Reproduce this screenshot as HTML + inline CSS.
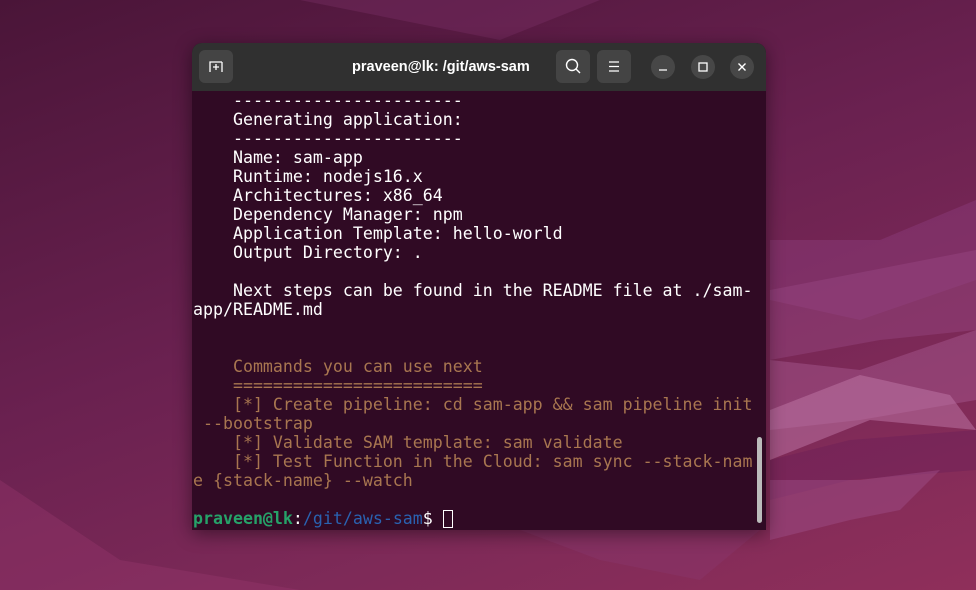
<!DOCTYPE html>
<html><head><meta charset="utf-8"><style>
html,body{margin:0;padding:0;width:976px;height:590px;overflow:hidden}
body{background:linear-gradient(160deg,#4a1538 0%,#6a2150 45%,#7e2a58 75%,#8f2f5a 100%);position:relative;font-family:"DejaVu Sans Mono","Liberation Mono",monospace}
svg.bg{position:absolute;left:0;top:0}
.win{position:absolute;left:192px;top:43px;width:574px;height:487px;border-radius:10px 10px 0 0;overflow:hidden;background:#300a24;box-shadow:0 4px 18px rgba(0,0,0,.45)}
.tb{height:48px;background:#303030;position:relative;color:#fff}
.btn{position:absolute;top:7px;width:34px;height:33px;background:#444;border-radius:6px}
.circ{position:absolute;top:12px;width:24px;height:24px;border-radius:50%;background:#474747}
.title{position:absolute;left:160px;top:16px;white-space:nowrap;font:bold 14.5px "Liberation Sans",sans-serif}
.term{position:absolute;left:1px;top:48px;width:570px;font-size:16.6px;line-height:19px;color:#fff;white-space:pre}
.o{color:#a87650}
.g{color:#26a269;font-weight:bold}
.b{color:#2a62b0}
.cur{display:inline-block;width:10px;height:18px;border:1.5px solid #fff;box-sizing:border-box;vertical-align:-4px}
.sb{position:absolute;right:4px;top:394px;width:5px;height:86px;border-radius:3px;background:#bbb}
</style></head><body>
<svg class="bg" width="976" height="590">
<polygon points="300,0 600,0 500,40" fill="#7a3066" opacity=".4"/>
<polygon points="770,240 880,240 976,200 976,280 860,320 770,300" fill="#8a3a78" opacity=".5"/>
<polygon points="770,290 976,250 976,330 880,340 770,360" fill="#9a4a88" opacity=".4"/>
<polygon points="770,360 860,370 976,330 976,400 860,420 770,430" fill="#a85a92" opacity=".45"/>
<polygon points="770,410 860,375 950,395 976,430 870,420 770,460" fill="#c078a8" opacity=".5"/>
<polygon points="770,460 850,440 976,430 976,470 850,480 770,500" fill="#6a1e58" opacity=".4"/>
<polygon points="770,480 860,480 940,470 900,510 850,520 770,540" fill="#a0508a" opacity=".45"/>
<polygon points="0,480 120,560 300,590 0,590" fill="#9a3a70" opacity=".35"/>
<polygon points="520,530 760,530 700,580 600,560" fill="#8a3a70" opacity=".35"/>
</svg>
<div class="win">
<div class="tb">
<div class="btn" style="left:7px"><svg width="34" height="33"><path d="M11 22V12h12M23 12v10" fill="none" stroke="#fff" stroke-width="1.3"/><path d="M17 14v6M14 17h6" stroke="#fff" stroke-width="1.3"/></svg></div>
<div class="title">praveen@lk: /git/aws-sam</div>
<div class="btn" style="left:364px"><svg width="34" height="33"><circle cx="16" cy="15" r="5.5" fill="none" stroke="#fff" stroke-width="1.4"/><path d="M20 19l4 4" stroke="#fff" stroke-width="1.4"/></svg></div>
<div class="btn" style="left:405px"><svg width="34" height="33"><path d="M12 12h10M12 16.5h10M12 21h10" stroke="#fff" stroke-width="1.3"/></svg></div>
<div class="circ" style="left:459px"><svg width="24" height="24"><path d="M8 15h8" stroke="#fff" stroke-width="1.3"/></svg></div>
<div class="circ" style="left:499px"><svg width="24" height="24"><rect x="8" y="8" width="8" height="8" fill="none" stroke="#fff" stroke-width="1.3"/></svg></div>
<div class="circ" style="left:538px"><svg width="24" height="24"><path d="M8.5 8.5l7 7M15.5 8.5l-7 7" stroke="#fff" stroke-width="1.4"/></svg></div>
</div>
<div class="term">    -----------------------
    Generating application:
    -----------------------
    Name: sam-app
    Runtime: nodejs16.x
    Architectures: x86_64
    Dependency Manager: npm
    Application Template: hello-world
    Output Directory: .

    Next steps can be found in the README file at ./sam-
app/README.md


<span class="o">    Commands you can use next
    =========================
    [*] Create pipeline: cd sam-app &amp;&amp; sam pipeline init
 --bootstrap
    [*] Validate SAM template: sam validate
    [*] Test Function in the Cloud: sam sync --stack-nam
e {stack-name} --watch</span>

<span class="g">praveen@lk</span>:<span class="b">/git/aws-sam</span>$ <span class="cur"></span></div>
<div class="sb"></div>
</div>
</body></html>
